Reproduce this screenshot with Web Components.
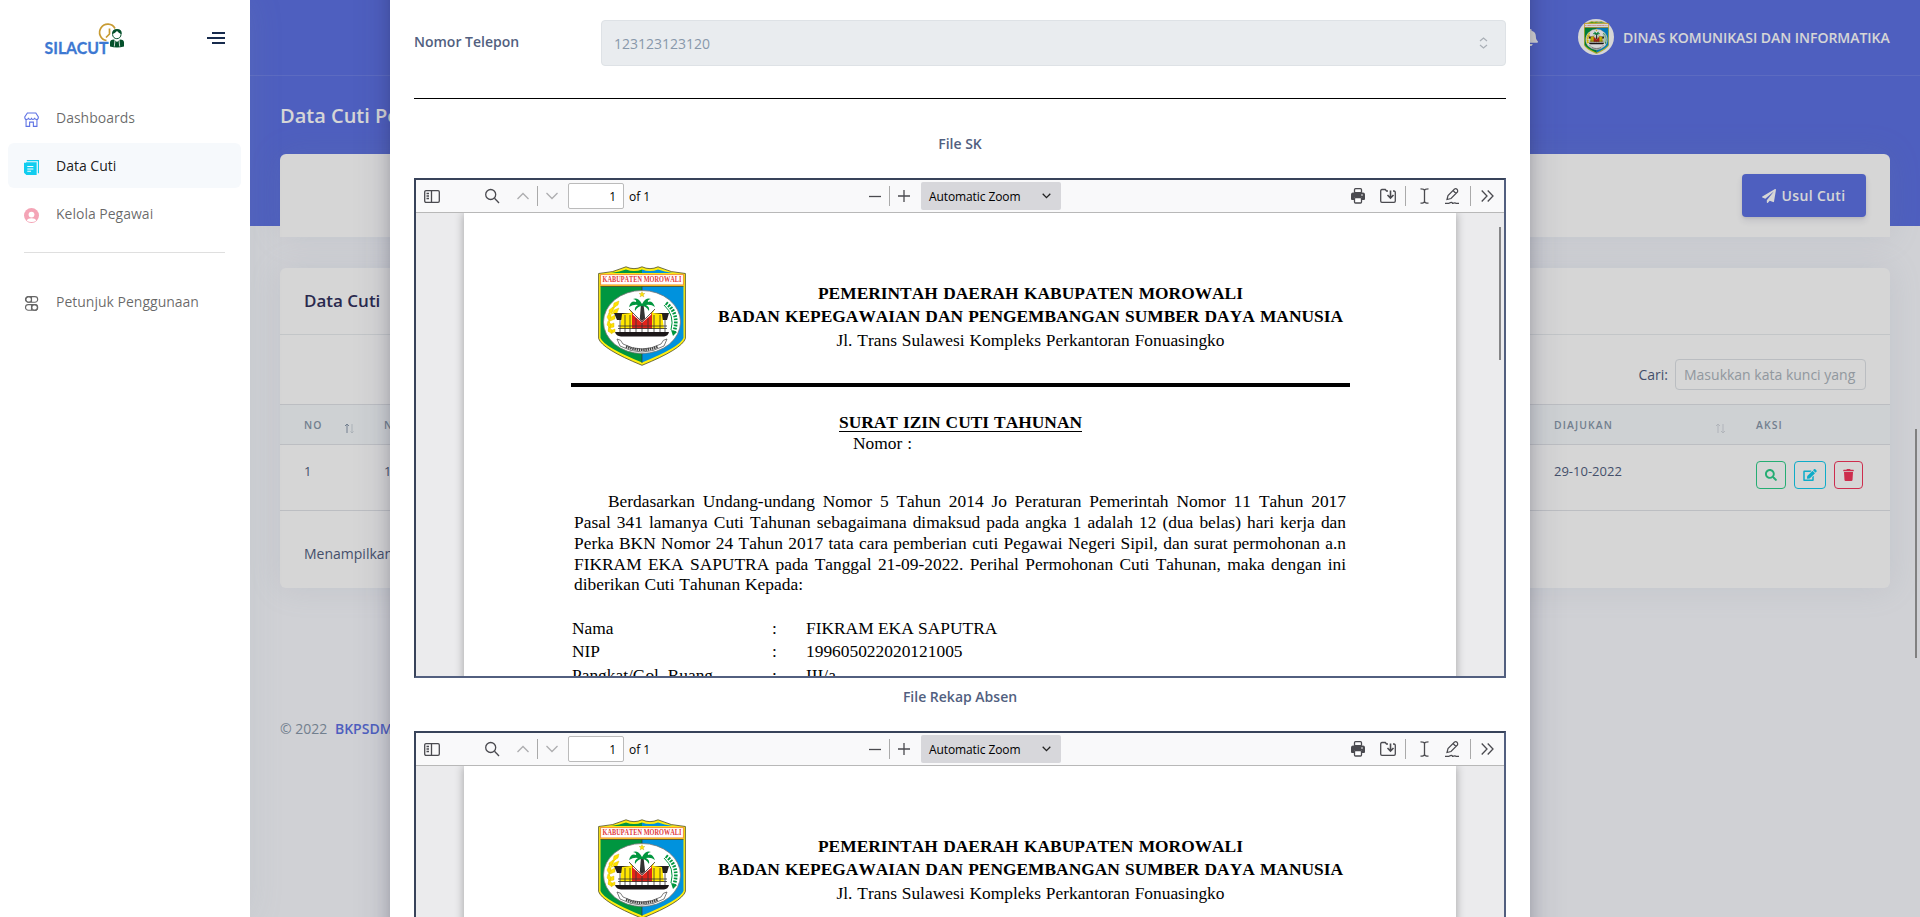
<!DOCTYPE html>
<html lang="id">
<head>
<meta charset="utf-8">
<title>SILACUTI - Data Cuti</title>
<style>
html,body{margin:0;height:100%;overflow:hidden}
body{font-family:"Open Sans","Noto Sans",sans-serif;font-size:14px;color:#525f7f}
</style>
</head>
<body>
<cuti-app></cuti-app>
<script>
const define=(name,html)=>customElements.define(name,class extends HTMLElement{
  constructor(){super();const r=this.attachShadow({mode:'open'});
    const t=document.createElement('template');
    t.innerHTML='<style>*{box-sizing:border-box}</style>'+(typeof html==='function'?html(this):html);
    r.append(t.content.cloneNode(true));}
});

/* Regional coat of arms */
define('city-crest',`
<style>:host{display:block;width:88px;height:100px}svg{display:block;width:100%;height:100%}</style>
<svg viewBox="0 0 88 100" preserveAspectRatio="none">
<path d="M.6 7.5Q15 7 28 .8Q36 4.500 44 .8Q52 4.500 60 .8Q73 7 87.400 7.500V72.500Q84 83 44 99.300Q4 83 .6 72.500Z" fill="#ffee10" stroke="#4a4a20" stroke-width=".8"/>
<path d="M13 7Q22 5.500 28 3.500Q36 6.500 44 3.500V7Z" fill="#009640"/><path d="M44 3.500Q52 6.500 60 3.500Q66 5.500 75 7H44Z" fill="#0092dd"/>
<rect x="2.500" y="8.500" width="83" height="10.500" fill="#fff" stroke="#f59a3a" stroke-width="1.200"/>
<text x="4.500" y="16.300" font-family="Liberation Serif,serif" font-weight="700" font-size="7.800" fill="#e2383c" textLength="79" lengthAdjust="spacingAndGlyphs">KABUPATEN MOROWALI</text>
<path d="M2.500 20.500H44V96.500Q6 81 2.500 72Z" fill="#009640"/><path d="M44 20.500H85.500V72Q82 81 44 96.500Z" fill="#0092dd"/>
<path d="M2.500 20.500H85.500M44 20.500V97" stroke="#333" stroke-width=".7"/>
<ellipse cx="44" cy="56" rx="38.500" ry="31.500" fill="#fff" stroke="#777" stroke-width=".8"/>
<path d="M44 25.500l.8 2h2.100l-1.700 1.300.7 2.100-1.900-1.200-1.900 1.200.7-2.100-1.700-1.300h2.100z" fill="#ffe600" stroke="#a89000" stroke-width=".3"/>
<path d="M20 37Q10 46 11 66" fill="none" stroke="#ffe600" stroke-width="1.300"/>
<path d="M21 35l-5 2-1 5 5-3zM15 41l-4 3v4l4-3zM21 42l-5 2-2 4 5-1zM11 47l-2 4 2 4 2-4zM17 49l-4 2-1 4 5-2zM10 55l-1 4 3 3 1-4zM16 57l-3 1-1 4 4-1zM11 61l-1 4 4 3v-4zM17 63l-3 1v3l3-1z" fill="#ffe200" stroke="#dcb800" stroke-width=".4"/>
<path d="M68 37Q82 48 76 66" fill="none" stroke="#00963e" stroke-width="3.600" stroke-dasharray="1.800 1.300"/><path d="M66 39Q77 49 73 64" fill="none" stroke="#00963e" stroke-width="1"/><path d="M73 64l6 2-4 4z" fill="#00963e"/>
<path d="M43 38h2.500l2 18h-6z" fill="#333"/>
<path d="M44 38Q40 31 35 33Q39 34 38 36Q33 34 31 41Q36 38 40 39Q36 41 37 45Q40 40 44 40Q48 40 51 45Q52 41 48 39Q53 38 57 41Q54 34 50 36Q49 34 53 33Q48 31 44 38Z" fill="#00963e"/>
<path d="M16 47h20l-8 7h-9zM71 47H52l8 7h9z" fill="#231f20"/>
<path d="M24 48l9-1-2-4 13 13 13-13-2 4 9 1 2 15H22z" fill="#ffe600"/><path d="M34 47l10 8 10-8v16H34z" fill="#e2231a"/>
<path d="M35 48l9 8 9-8" fill="none" stroke="#fff" stroke-width="1.200"/>
<path d="M31 43l13 13 13-13M20 60h49M20 62.500h49M27 49v17M32 49v17M38 52v14M50 52v14M56 49v17M62 49v17M67 54v12M22 54v12M44 57v9" stroke="#333" stroke-width=".8" fill="none"/>
<path d="M17 66h54q-1 4-5 4.500H23q-5-.5-6-4.500z" fill="#1c1718"/>
<path d="M19 73q4 0 6 5 19 10 38 0 2-5 6-5l-3 7Q44 92 22 80z" fill="#fff" stroke="#444" stroke-width=".7"/>
<path d="M28 80.500Q44 87 60 80.500" fill="none" stroke="#444" stroke-width="2.600" stroke-dasharray="1.500 .7"/>
</svg>`);

define('app-logo',`
<style>:host{display:block;width:80px;height:33px}svg{display:block;overflow:visible}text{font:700 17.500px Lato,"Open Sans",sans-serif}</style>
<svg width="80" height="33" viewBox="0 0 80 33">
<text x="-.5" y="31.300" fill="#3d78d2" stroke="#3d78d2" stroke-width=".3" textLength="64" lengthAdjust="spacingAndGlyphs">SILACUT</text>
<path d="M70 5.500A8.200 8.200 0 1 0 61.500 17.500M64.500 5.500V11l-3.500 3.500" fill="none" stroke="#c89b32" stroke-width="1.700"/>
<circle cx="71.800" cy="11.500" r="4.200" fill="#fff" stroke="#04502b" stroke-width="1"/><path d="M67 11q0-5 5-5t4.800 5q-3-.5-4.800-3-2 2.500-5 3z" fill="#04502b"/>
<path d="M65 23.500v-4q0-3 4-3l3 2.500 3-2.500q4 0 4 3v4q-7 1.800-14 0z" fill="#04502b"/><path d="M70 17l-.7 6.500M74 17l.7 6.500" stroke="#fff" stroke-width=".8"/>
</svg>`);

define('nav-item',el=>`
<style>:host{display:block;height:45px;margin:0 9px 3px 8px;padding-left:16px;border-radius:6px;color:rgba(0,0,0,.6)}
:host([active]){background:#f6f9fc;color:rgba(0,0,0,.9)}
div{display:flex;height:100%;align-items:center}span{margin-left:17px;line-height:21px}svg{display:block;margin-top:4px}</style>
<div><svg width="15" height="15" viewBox="0 0 16 16">${{
shop:'<g fill="none" stroke="#5e72e4" stroke-width="1.150"><path d="M3.600 1h9L15.300 5.200Q15.300 8 13.400 8 11.600 8 11.300 6.200 10.900 8 9.500 8T8 6.200Q7.900 8 6.500 8T4.800 6.200Q4.500 8 2.700 8 .8 8 .8 5.200z"/><path d="M2.200 8v7.300h3.800v-4.500h4v4.500h3.800V8"/></g>',
docs:'<path fill="#11cdef" d="M3 0h13v14h-1.200V1.200H3zM0 3h2.200V2.400H13.500V16H2.500L0 13.500z"/><path d="M3.500 7h6.500M3.500 9.500h6.500M3.500 12h4" stroke="#fff" stroke-width="1.100"/>',
user:'<circle cx="8" cy="8" r="8" fill="#f4a4b6"/><circle cx="8" cy="7" r="3.100" fill="#fff"/><path d="M3 13.500q1-2.500 5-2.500t5 2.500Q11 15 8 15t-5-1.500z" fill="#fff"/>',
ui:'<g fill="none" stroke="#666" stroke-width="1.200"><rect x="1.600" y=".7" width="13" height="6" rx="3"/><circle cx="5" cy="3.700" r="3"/><path d="M8 1v5.500"/><rect x="1.600" y="9.200" width="13" height="6" rx="3"/><circle cx="11.300" cy="12.200" r="3"/><path d="M8 9.500V15"/></g>'
}[el.getAttribute('icon')]}</svg><span><slot></slot></span></div>`);

define('side-bar',`
<style>:host{display:block;position:relative;z-index:3;width:250px;height:917px;background:#fff;box-shadow:0 0 32px rgba(136,152,170,.15)}
header{display:flex;justify-content:space-between;align-items:flex-start;height:95px;padding:23px 25px 0 45px}
header svg{margin-top:9px}hr{border:0;height:1px;background:#dfdfdf;margin:16px 25px 26px 24px}</style>
<header><app-logo></app-logo><svg width="18" height="12"><path d="M5 1h13M0 6h18M5 11h13" stroke="#172b4d" stroke-width="2"/></svg></header>
<nav><nav-item icon="shop">Dashboards</nav-item><nav-item icon="docs" active>Data Cuti</nav-item><nav-item icon="user">Kelola Pegawai</nav-item>
<hr><nav-item icon="ui">Petunjuk Penggunaan</nav-item></nav>`);

define('top-bar',`
<style>:host{display:flex;align-items:center;justify-content:flex-end;height:76px;padding:0 30px 1px 0;border-bottom:1px solid rgba(255,255,255,.1);color:#fff;font-weight:600}
.av{width:36px;height:36px;border-radius:50%;background:#fff;display:flex;align-items:center;justify-content:center;margin:0 9px 0 40px}
city-crest{width:25px;height:33px}span{width:267px;white-space:nowrap;letter-spacing:-.03px;padding-top:1px}</style>
<svg width="15" height="17" viewBox="0 0 448 512"><path fill="#fff" d="M224 512c35.300 0 64-28.700 64-64H160c0 35.300 28.700 64 64 64zm215-150c-19-21-55-52-55-154 0-78-54-140-128-155V32a32 32 0 1 0-64 0v21C118 68 64 130 64 208c0 102-36 133-55 154-6 6-9 14-9 22 0 16 13 32 32 32h384c19 0 32-16 32-32 0-8-3-16-9-22z"/></svg>
<div class="av"><city-crest></city-crest></div><span>DINAS KOMUNIKASI DAN INFORMATIKA</span>`);

define('action-button',el=>`
<style>:host{display:flex;align-items:center;justify-content:center;height:28px;border:1px solid var(--c);border-radius:4px;color:var(--c)}</style>
<svg width="${el.getAttribute('size')||12}" height="12" viewBox="0 0 ${el.getAttribute('icon')==='edit'?'576':el.getAttribute('icon')==='trash'?'448':'512'} 512"><path fill="currentColor" d="${{
search:'M505 442.700L405.300 343c-4.500-4.500-10.600-7-17-7H372c27.600-35.300 44-79.700 44-128C416 93.100 322.900 0 208 0S0 93.100 0 208s93.100 208 208 208c48.300 0 92.700-16.400 128-44v16.300c0 6.400 2.500 12.500 7 17l99.700 99.700c9.400 9.400 24.600 9.400 33.900 0l28.300-28.300c9.400-9.400 9.400-24.600.1-34zM208 336c-70.700 0-128-57.200-128-128 0-70.700 57.200-128 128-128 70.700 0 128 57.200 128 128 0 70.700-57.200 128-128 128z',
edit:'M402.600 83.200l90.200 90.200c3.800 3.800 3.800 10 0 13.800L274.400 405.600l-92.800 10.300c-12.400 1.400-22.900-9.100-21.500-21.500l10.300-92.800L388.800 83.200c3.800-3.800 10-3.800 13.800 0zm162-22.900l-48.800-48.800c-15.200-15.200-39.900-15.200-55.200 0l-35.400 35.400c-3.800 3.800-3.800 10 0 13.800l90.200 90.200c3.800 3.800 10 3.800 13.800 0l35.400-35.400c15.200-15.300 15.200-40 0-55.200zM384 346.200V448H64V128h229.800c3.200 0 6.200-1.300 8.500-3.500l40-40c7.600-7.600 2.200-20.500-8.500-20.500H48C21.500 64 0 85.500 0 112v352c0 26.500 21.500 48 48 48h352c26.500 0 48-21.500 48-48V306.200c0-10.700-12.900-16-20.500-8.500l-40 40c-2.200 2.300-3.500 5.300-3.500 8.500z',
trash:'M432 32H312l-9.400-18.700A24 24 0 0 0 281.100 0H166.800a23.700 23.700 0 0 0-21.400 13.300L136 32H16A16 16 0 0 0 0 48v32a16 16 0 0 0 16 16h416a16 16 0 0 0 16-16V48a16 16 0 0 0-16-16zM53.200 467a48 48 0 0 0 47.900 45h245.800a48 48 0 0 0 47.900-45L416 128H32z'}[el.getAttribute('icon')]}"/></svg>`);

define('data-card',`
<style>:host{display:block;height:320px;background:#fff;border-radius:6px;box-shadow:0 0 32px rgba(136,152,170,.15);white-space:nowrap}
h3{margin:0;height:67px;border-bottom:1px solid #e9ecef;padding:21px 24px;font-size:17px;line-height:24px;font-weight:600;color:#32325d}
.find{height:69px;padding:24px 24px 0;display:flex;justify-content:flex-end;line-height:31px;gap:7px}
.find div{width:191px;height:31px;border:1px solid #dee2e6;border-radius:4px;color:#adb5bd;padding:0 8px;line-height:30px}
.row{display:grid;grid-template-columns:80px 1fr 202px 158px;border-top:1px solid #e0e3e8}
.row>*{padding-left:24px}
.head{height:40px;background:#f6f9fc;color:#8898aa;font-size:10.400px;font-weight:600;letter-spacing:1.100px;line-height:41px}
.head>*{display:flex;justify-content:space-between;padding-right:6px}
svg{display:block;margin-top:18px}
.body{height:66px;font-size:13px;line-height:18px;padding-top:16px}
.body>*{padding-top:1px}
.body>.act{display:flex;gap:8px;padding-top:0}
.foot{border-top:1px solid #e0e3e8;padding:32px 24px;line-height:21px}</style>
<h3>Data Cuti</h3>
<div class="find"><span>Cari:</span><div>Masukkan kata kunci yang</div></div>
<div class="row head"><div style="padding-right:5px">NO<svg width="11" height="11"><path d="M3 10V1M1 3l2-2 2 2" fill="none" stroke="#8898aa"/><path d="M8 1v9M6.500 8.500L8 10l1.500-1.500" fill="none" stroke="#ccd3da"/></svg></div><div>NIP</div><div>DIAJUKAN<svg width="11" height="11"><path d="M3 10V1M1 3l2-2 2 2M8 1v9M6 8l2 2 2-2" fill="none" stroke="#d3d8de"/></svg></div><div>AKSI</div></div>
<div class="row body"><div>1</div><div>199605022020121005</div><div>29-10-2022</div>
<div class="act"><action-button icon="search" style="width:30px;--c:#2dce89"></action-button><action-button icon="edit" size="14" style="width:32px;--c:#11cdef"></action-button><action-button icon="trash" size="11" style="width:29px;--c:#f5365c"></action-button></div></div>
<div class="foot">Menampilkan 1 sampai 1 dari 1 data</div>`);

define('page-content',`
<style>:host{display:block;flex:1;background:linear-gradient(#5e72e4 226px,#f8f9fe 226px);height:917px}
h2{margin:0;padding:25px 30px 0;height:78px;font-size:20px;line-height:30px;font-weight:600;color:#fff}
main{padding:0 30px}
.card{height:83px;background:#fff;border-radius:6px 6px 0 0;box-shadow:0 0 32px rgba(136,152,170,.15);margin-bottom:31px;padding:20px 24px;display:flex;justify-content:flex-end}
.btn{width:124px;height:43px;border-radius:4px;background:#5e72e4;color:#fff;font-weight:600;letter-spacing:.35px;display:flex;align-items:center;justify-content:center;gap:5px;box-shadow:0 4px 6px rgba(50,50,93,.11),0 1px 3px rgba(0,0,0,.08)}
footer{padding:130px 30px 0;color:#8898aa;line-height:21px}b{font-weight:600;color:#5e72e4;margin-left:4px}</style>
<top-bar></top-bar><h2>Data Cuti Pegawai</h2>
<main><div class="card"><div class="btn"><svg width="14" height="14" viewBox="0 0 512 512"><path fill="#fff" d="M476 3.200L12.500 270.600c-18.100 10.400-15.800 35.600 2.200 43.200L121 358.400l287.300-253.200c5.500-4.900 13.300 2.600 8.600 8.300L176 407v80.500c0 23.600 28.500 32.900 42.500 15.800L282 426l124.600 52.200c14.200 6 30.400-2.900 33-18.200l72-432C515 7.800 493.300-6.800 476 3.200z"/></svg>Usul Cuti</div></div>
<data-card></data-card></main>
<footer>© 2022 <b>BKPSDM</b></footer>`);

define('pdf-toolbar',`
<style>:host{display:flex;align-items:center;height:33px;background:#f9f9fa;border-bottom:1px solid #b8b8b8;color:#000;font-size:12px;padding-right:10px}
.left{width:453px}.g{display:flex;align-items:center;height:100%}.right{margin-left:auto}
svg{display:block;flex:none;margin-left:var(--m,0);stroke:#4a4a4f;fill:none;stroke-width:1.300}
i{width:1px;height:20px;background:#aaa;margin-left:8px}.dim{stroke:#adadaf}
.pg{width:56px;height:26px;border:1px solid #bbb;border-radius:2px;background:#fff;text-align:right;padding-right:7px;line-height:26px;margin:0 5px 0 10px}
.sel{width:140px;height:28px;background:#d7d7db;border-radius:2px;margin-left:11px;padding:0 10px 0 8px;line-height:29px;letter-spacing:-.1px;display:flex;align-items:center;justify-content:space-between}
.t{padding-top:1px}</style>
<div class="g left">
<svg style="--m:8px" width="16" height="13"><rect x=".7" y=".7" width="14.600" height="11.600" rx="1.300"/><path d="M7.500 1v11M2.500 3.500H5M2.500 6H5M2.500 8.500H5"/></svg>
<svg style="--m:44px" width="16" height="16"><circle cx="6.700" cy="6.500" r="5"/><path d="M10.500 10.300l4.500 4.700"/></svg>
<svg class="dim" style="--m:17px" width="12" height="8"><path d="M.5 7L6 1.500 11.500 7"/></svg><i></i>
<svg class="dim" style="--m:8px" width="12" height="8"><path d="M.5 1L6 6.500 11.500 1"/></svg>
<div class="pg">1</div><span class="t">of 1</span></div>
<div class="g"><svg width="12" height="12"><path d="M0 6.500h12"/></svg><i></i><svg style="--m:8px" width="12" height="12"><path d="M0 6h12M6 0v12"/></svg>
<div class="sel"><span class="t">Automatic Zoom</span><svg width="9" height="6" style="stroke:#222"><path d="M.7.8L4.500 4.600 8.300.8"/></svg></div></div>
<div class="g right">
<svg width="14" height="16"><rect x="3.500" y=".7" width="7" height="4" rx="1"/><path d="M2 4.500h10q2 0 2 2V11q0 1-1 1h-2V9.500H3V12H1q-1 0-1-1V6.500q0-2 2-2z" fill="#4a4a4f" stroke="none"/><rect x="3.500" y="9.500" width="7" height="5.500" rx="1" fill="#fff"/><circle cx="11" cy="7" r=".8" fill="#fff" stroke="none"/></svg>
<svg style="--m:15px" width="16" height="16"><path d="M8 3H6.500L5.300 1.500H2Q.7 1.500.7 3v10q0 1.300 1.300 1.300h12q1.300 0 1.300-1.300V4.500Q15.300 3 14 3h-1"/><path d="M10.500 2.500v7M7.500 7l3 3 3-3" stroke-width="1.600"/></svg>
<i style="margin-left:9px"></i>
<svg style="--m:14px" width="9" height="16"><path d="M.5.8q4 0 4 2v10.400q0 2-4 2M8.500.8q-4 0-4 2v10.400q0 2 4 2"/></svg>
<svg style="--m:16px" width="15" height="16"><path d="M2 11.500l1-4L9.500 1Q11 .3 12 1.200T12.500 4L6 10.500zM8 2.500l3 3M0 15.300h4q3-2 3.500 0 3-.7 3.500 0h3" stroke-width="1.200"/></svg>
<i style="margin-left:10px"></i>
<svg style="--m:10px" width="13" height="12"><path d="M.7.5L6 6 .7 11.500M6.700.5L12 6l-5.300 5.500"/></svg></div>`);

/* One line of the letter; its words are spread to the given width */
define('doc-line',`<style>:host{display:block;white-space:nowrap;text-align:justify;text-align-last:justify}</style><slot></slot>`);

define('leave-letter',`
<style>:host{display:block;position:relative;margin:0 48px;height:900px;background:#fff;color:#000;font-family:"Liberation Serif",serif;font-size:17.400px;line-height:20.800px;box-shadow:0 0 9px rgba(0,0,0,.32);padding-top:53px;font-kerning:none}
.kop{display:flex;padding-left:134px;height:117px}
.head{margin-left:32px;width:625px;padding-top:16px;line-height:23.400px}
.head doc-line{margin:0 auto}
.b{font-weight:700}
.bar{width:779px;height:4px;background:#000;margin-left:107px}
.title{width:243px;margin:25px 0 0 375px;height:20px;line-height:20px;border-bottom:1px solid #000}
.no{margin:.5px 0 0 389px;width:59px}
.para{width:772px;margin:38px 0 0 110px}
dl{display:grid;grid-template-columns:200px 34px 1fr;margin:22px 0 0 108px;line-height:23.200px}dt,dd{margin:0}</style>
<div class="kop"><city-crest></city-crest><div class="head">
<doc-line class="b" style="width:425px">PEMERINTAH DAERAH KABUPATEN MOROWALI</doc-line>
<doc-line class="b">BADAN KEPEGAWAIAN DAN PENGEMBANGAN SUMBER DAYA MANUSIA</doc-line>
<doc-line style="width:388px">Jl. Trans Sulawesi Kompleks Perkantoran Fonuasingko</doc-line></div></div>
<div class="bar"></div>
<doc-line class="title b">SURAT IZIN CUTI TAHUNAN</doc-line>
<doc-line class="no">Nomor :</doc-line>
<div class="para">
<doc-line style="margin-left:34px">Berdasarkan Undang-undang Nomor 5 Tahun 2014 Jo Peraturan Pemerintah Nomor 11 Tahun 2017</doc-line>
<doc-line>Pasal 341 lamanya Cuti Tahunan sebagaimana dimaksud pada angka 1 adalah 12 (dua belas) hari kerja dan</doc-line>
<doc-line>Perka BKN Nomor 24 Tahun 2017 tata cara pemberian cuti Pegawai Negeri Sipil, dan surat permohonan a.n</doc-line>
<doc-line>FIKRAM EKA SAPUTRA pada Tanggal 21-09-2022. Perihal Permohonan Cuti Tahunan, maka dengan ini</doc-line>
<doc-line style="width:229px">diberikan Cuti Tahunan Kepada:</doc-line></div>
<dl><dt>Nama</dt><dd>:</dd><dd>FIKRAM EKA SAPUTRA</dd><dt>NIP</dt><dd>:</dd><dd>199605022020121005</dd><dt>Pangkat/Gol. Ruang</dt><dd>:</dd><dd>III/a</dd></dl>`);

define('pdf-viewer',`
<style>:host{display:block;height:500px;border:2px solid;border-color:#38435a #525f7f #525f7f #38435a;overflow:hidden;background:#ebebed;position:relative}
pdf-toolbar{position:relative;z-index:1}
.bar{position:absolute;right:3px;top:47px;width:2px;height:133px;background:#858587}
:host([idle]) .bar{display:none}</style>
<pdf-toolbar></pdf-toolbar><leave-letter></leave-letter><div class="bar"></div>`);

define('detail-modal',`
<style>:host{display:block;position:absolute;z-index:2;inset:0;background:rgba(0,0,0,.16);overflow:hidden}
.m{width:1140px;height:1200px;margin:-100px 0 0 390px;padding:120px 24px 0;background:#fff;box-shadow:0 15px 35px rgba(50,50,93,.2),0 5px 15px rgba(0,0,0,.17)}
.row{display:flex;height:46px}
label{width:187px;font-weight:600;line-height:44px}
.in{flex:1;border:1px solid #dee2e6;border-radius:4px;background:#e9ecef;color:#8898aa;padding:0 17px 0 12px;display:flex;align-items:center;justify-content:space-between}
hr{border:0;height:1px;background:#000;margin:32px 0 0}
p{margin:0;text-align:center;font-weight:600;line-height:21px}</style>
<div class="m"><div class="row"><label>Nomor Telepon</label><div class="in"><span>123123123120</span><svg width="9" height="12"><path d="M1 4l3.500-3L8 4M1 8l3.500 3L8 8" fill="none" stroke="#a9afb6" stroke-width="1.200"/></svg></div></div>
<hr><p style="padding:34px 0 24px">File SK</p><pdf-viewer></pdf-viewer><p style="padding:8px 0 24px">File Rekap Absen</p><pdf-viewer idle></pdf-viewer></div>`);

define('cuti-app',`
<style>:host{display:flex;position:relative;width:1920px;height:917px;overflow:hidden}
.bar{position:absolute;z-index:4;left:1915px;top:429px;width:2px;height:229px;background:#808080}</style>
<side-bar></side-bar><page-content></page-content><detail-modal></detail-modal><div class="bar"></div>`);
</script>
</body>
</html>
